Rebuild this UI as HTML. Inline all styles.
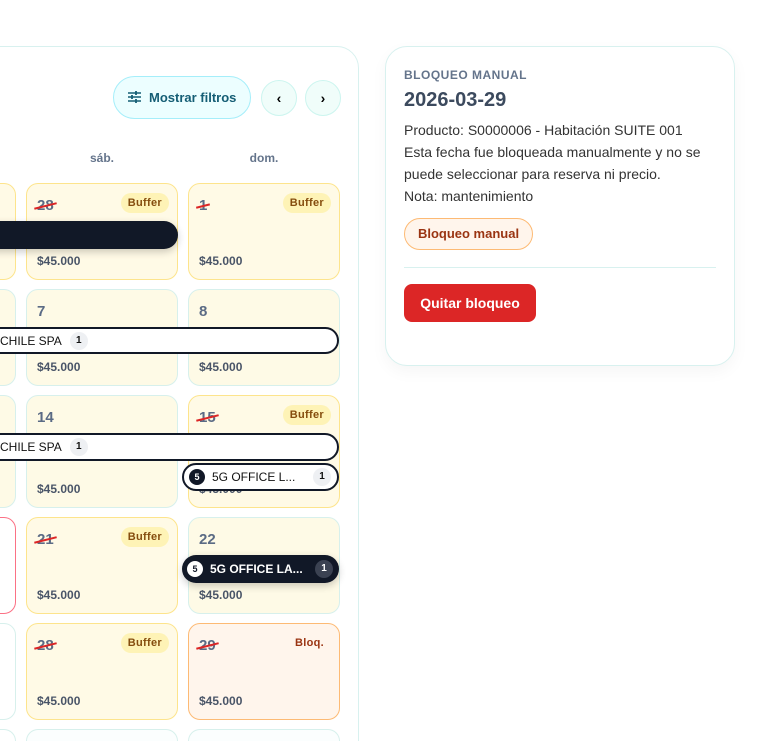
<!DOCTYPE html><html><head><meta charset="utf-8"><style>
html,body{margin:0;height:741px;overflow:hidden}
body{width:758px;background:#fff;font-family:"Liberation Sans",sans-serif}
#w{position:relative;width:758px;height:741px;overflow:hidden}
.a{position:absolute;box-sizing:border-box}
.panel{left:-30px;top:46px;width:389px;height:720px;border:1px solid #d8f1ef;border-radius:22px;background:#fff}
.c{position:absolute;box-sizing:border-box;border-radius:12px;background:#fefae6;border:1px solid #d7f0ec}
.c.b{border-color:#fde48c;background:#fffae6}
.c.o{border-color:#fdba74;background:#fff5ec}
.n{position:absolute;left:10px;top:13px;font-weight:bold;font-size:15px;color:#5b6b85}
.n.s::after{content:"";position:absolute;left:-3px;right:-3px;top:8px;height:2px;background:#dc2626;transform:rotate(-14deg)}
.p{position:absolute;left:10px;bottom:11px;font-weight:bold;font-size:12px;color:#4a5568}
.bf{position:absolute;right:8px;top:9px;background:#fef3b6;color:#854d0e;font-weight:bold;font-size:11px;padding:4px 7px;border-radius:11px;letter-spacing:.3px}
.bar{position:absolute;box-sizing:border-box;border-radius:14px;font-size:12px;display:flex;align-items:center}
.w{background:#fff;border:2px solid #111827;color:#111}
.k{background:#111827;color:#fff;box-shadow:0 3px 8px rgba(0,0,0,.2)}
.q{display:inline-block;width:18px;height:18px;border-radius:9px;background:#eef0f3;color:#111;font-size:10px;font-weight:bold;text-align:center;line-height:18px}
.k .q{background:#3b4252;color:#fff}
.ci{display:inline-block;width:16px;height:16px;border-radius:8px;background:#111827;color:#fff;font-size:9px;font-weight:bold;text-align:center;line-height:16px;margin-right:7px}
.k .ci{background:#fff;color:#111827}
</style></head><body><div id="w">
<div class="a panel"></div>
<div class="a" style="left:113px;top:76px;width:138px;height:43px;border:1px solid #a5eefa;background:#ecfeff;border-radius:22px;color:#155e75;font-weight:bold;font-size:13px;line-height:41px;padding-left:35px">Mostrar filtros
<svg style="position:absolute;left:13px;top:13px" width="15" height="14" viewBox="0 0 15 14" stroke="#155e75" stroke-width="1.6" fill="none"><path d="M1 3h13M1 7h13M1 11h13"/><path d="M9 1v4M5 5v4M9 9v4" stroke-width="1.8"/></svg></div>
<div class="a" style="left:261px;top:80px;width:36px;height:36px;border:1px solid #ccf5ef;background:#f0fdfa;border-radius:18px;text-align:center;line-height:34px;font-weight:bold;font-size:14px">‹</div>
<div class="a" style="left:305px;top:80px;width:36px;height:36px;border:1px solid #ccf5ef;background:#f0fdfa;border-radius:18px;text-align:center;line-height:34px;font-weight:bold;font-size:14px">›</div>
<div class="a" style="left:26px;top:151px;width:152px;text-align:center;font-size:12px;font-weight:bold;color:#64748b">sáb.</div>
<div class="a" style="left:188px;top:151px;width:152px;text-align:center;font-size:12px;font-weight:bold;color:#64748b">dom.</div>

<div class="c b" style="left:-140px;top:183px;width:156px;height:97px"></div>
<div class="c" style="left:-140px;top:289px;width:156px;height:97px"></div>
<div class="c" style="left:-140px;top:395px;width:156px;height:113px"></div>
<div class="c" style="left:-140px;top:517px;width:156px;height:97px;border-color:#fb7185;background:#fff"></div>
<div class="c" style="left:-140px;top:623px;width:156px;height:97px;background:#fff"></div>
<div class="c" style="left:-140px;top:729px;width:156px;height:12px;border-bottom:none;border-radius:12px 12px 0 0;background:#fff"></div>

<div class="c b" style="left:26px;top:183px;width:152px;height:97px"><div class="n s">28</div><div class="bf">Buffer</div><div class="p">$45.000</div></div>
<div class="c b" style="left:188px;top:183px;width:152px;height:97px"><div class="n s">1</div><div class="bf">Buffer</div><div class="p">$45.000</div></div>
<div class="c" style="left:26px;top:289px;width:152px;height:97px"><div class="n">7</div><div class="p">$45.000</div></div>
<div class="c" style="left:188px;top:289px;width:152px;height:97px"><div class="n">8</div><div class="p">$45.000</div></div>
<div class="c" style="left:26px;top:395px;width:152px;height:113px"><div class="n">14</div><div class="p">$45.000</div></div>
<div class="c b" style="left:188px;top:395px;width:152px;height:113px"><div class="n s">15</div><div class="bf">Buffer</div><div class="p">$45.000</div></div>
<div class="c b" style="left:26px;top:517px;width:152px;height:97px"><div class="n s">21</div><div class="bf">Buffer</div><div class="p">$45.000</div></div>
<div class="c" style="left:188px;top:517px;width:152px;height:97px"><div class="n">22</div><div class="p">$45.000</div></div>
<div class="c b" style="left:26px;top:623px;width:152px;height:97px"><div class="n s">28</div><div class="bf">Buffer</div><div class="p">$45.000</div></div>
<div class="c o" style="left:188px;top:623px;width:152px;height:97px"><div class="n s">29</div><div class="bf" style="background:#fff5ec;color:#9a3412;top:9px">Bloq.</div><div class="p">$45.000</div></div>
<div class="c" style="left:26px;top:729px;width:152px;height:12px;border-bottom:none;border-radius:12px 12px 0 0;background:#fbfefe"></div>
<div class="c" style="left:188px;top:729px;width:152px;height:12px;border-bottom:none;border-radius:12px 12px 0 0;background:#fbfefe"></div>

<div class="bar k" style="left:-20px;top:221px;width:198px;height:28px"></div>
<div class="bar w" style="left:-20px;top:327px;width:359px;height:27px;padding-left:18px">CHILE SPA<span class="q" style="margin-left:8px">1</span></div>
<div class="bar w" style="left:-20px;top:433px;width:359px;height:28px;padding-left:18px">CHILE SPA<span class="q" style="margin-left:8px">1</span></div>
<div class="bar w" style="left:182px;top:463px;width:157px;height:28px;padding-left:5px">
<span class="ci">5</span>5G OFFICE L...<span class="q" style="margin-left:auto;margin-right:6px">1</span></div>
<div class="bar k" style="left:182px;top:555px;width:157px;height:28px;padding-left:5px;font-weight:bold">
<span class="ci">5</span>5G OFFICE LA...<span class="q" style="margin-left:auto;margin-right:6px">1</span></div>

<div class="a" style="left:385px;top:46px;width:350px;height:320px;border:1px solid #d8f1ef;border-radius:22px;background:#fff;box-shadow:0 6px 16px rgba(0,0,0,.04)">
<div class="a" style="left:18px;top:21px;font-size:12px;font-weight:bold;color:#64748b;letter-spacing:.5px">BLOQUEO MANUAL</div>
<div class="a" style="left:18px;top:42px;font-size:20px;font-weight:bold;color:#3c4a5e">2026-03-29</div>
<div class="a" style="left:18px;top:72px;width:320px;font-size:14px;line-height:22px;color:#333">Producto: S0000006 - Habitación SUITE 001<br>Esta fecha fue bloqueada manualmente y no se puede seleccionar para reserva ni precio.<br>Nota: mantenimiento</div>
<div class="a" style="left:18px;top:171px;width:129px;height:32px;border:1px solid #fdba74;background:#fff5ec;border-radius:16px;color:#9a3412;font-weight:bold;font-size:13px;line-height:30px;text-align:center">Bloqueo manual</div>
<div class="a" style="left:18px;top:220px;width:312px;height:1px;background:#d8f1ef"></div>
<div class="a" style="left:18px;top:237px;width:132px;height:38px;background:#dc2626;border-radius:8px;color:#fff;font-weight:bold;font-size:14px;line-height:38px;text-align:center">Quitar bloqueo</div>
</div>
</div></body></html>
